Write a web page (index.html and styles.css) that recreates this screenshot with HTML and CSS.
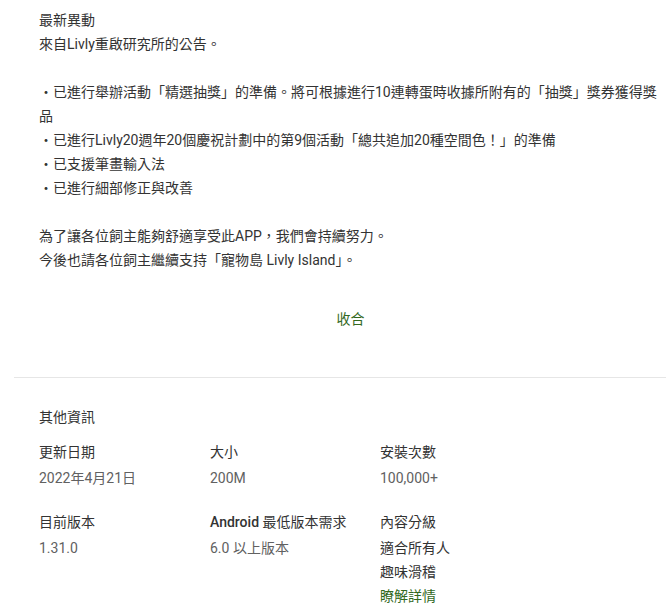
FILE: index.html
```html
<!DOCTYPE html>
<html lang="zh-Hant">
<head>
    <meta charset="UTF-8">
    <meta name="viewport" content="width=device-width, initial-scale=1.0">
    <title>寵物島 Livly Island</title>
    <link rel="stylesheet" href="styles.css">
</head>
<body>
    <div class="page">
        <!-- 最新異動 -->
        <section class="whats-new">
            <h2 class="section-title">最新異動</h2>
            <div class="release-notes">
                來自Livly重啟研究所的公告。<br>
                <br>
                ・已進行舉辦活動「精選抽獎」的準備。將可根據進行10連轉蛋時收據所附有的「抽獎」獎券獲得獎品<br>
                ・已進行Livly20週年20個慶祝計劃中的第9個活動「總共追加20種空間色！」的準備<br>
                ・已支援筆畫輸入法<br>
                ・已進行細部修正與改善<br>
                <br>
                為了讓各位飼主能夠舒適享受此APP，我們會持續努力。<br>
                今後也請各位飼主繼續支持「寵物島 Livly Island」。
            </div>
            <div class="collapse-row">
                <a href="#" class="btn-collapse">收合</a>
            </div>
        </section>

        <!-- 其他資訊 -->
        <section class="additional-info">
            <h2 class="section-title">其他資訊</h2>
            <div class="info-grid">
                <div class="info-item">
                    <div class="info-label">更新日期</div>
                    <div class="info-value">2022年4月21日</div>
                </div>
                <div class="info-item">
                    <div class="info-label">大小</div>
                    <div class="info-value">200M</div>
                </div>
                <div class="info-item">
                    <div class="info-label">安裝次數</div>
                    <div class="info-value">100,000+</div>
                </div>
                <div class="info-item">
                    <div class="info-label">目前版本</div>
                    <div class="info-value">1.31.0</div>
                </div>
                <div class="info-item">
                    <div class="info-label"><span class="latin-medium">Android</span> 最低版本需求</div>
                    <div class="info-value">6.0 以上版本</div>
                </div>
                <div class="info-item">
                    <div class="info-label">內容分級</div>
                    <div class="info-value dark">適合所有人</div>
                    <div class="info-value dark">趣味滑稽</div>
                    <a href="#" class="info-link">瞭解詳情</a>
                </div>
            </div>
        </section>
    </div>
</body>
</html>
```

FILE: styles.css
```css
/* Reset some default styles */
* {
    margin: 0;
    padding: 0;
    box-sizing: border-box;
}

body {
    font-family: Roboto, 'Noto Sans CJK TC', sans-serif;
    font-size: 14px;
    line-height: 24px;
    color: #333;
    background: #fff;
    overflow: hidden;
}

.page {
    width: 668px;
    margin-left: 14px;
}

.section-title {
    font-size: 14px;
    font-weight: normal;
    line-height: 24px;
    color: #333;
}

/* 最新異動 */
.whats-new {
    padding: 8px 20px 0 25px;
    border-bottom: 1px solid #e6e6e6;
}

.release-notes {
    line-height: 24px;
}

.collapse-row {
    text-align: center;
    margin-top: 35px;
    padding-bottom: 46px;
}

.btn-collapse {
    color: #33691e;
    text-decoration: none;
}

/* 其他資訊 */
.additional-info {
    padding: 27px 20px 0 25px;
}

.info-grid {
    display: grid;
    grid-template-columns: 171px 170px 170px;
    row-gap: 20px;
    margin-top: 11px;
}

.info-label {
    color: #333;
    margin-bottom: 2px;
}

.latin-medium {
    font-weight: 500;
}

.info-value {
    color: #616161;
}

.info-value.dark {
    color: #333;
}

.info-link {
    display: block;
    color: #33691e;
    text-decoration: none;
}
```
